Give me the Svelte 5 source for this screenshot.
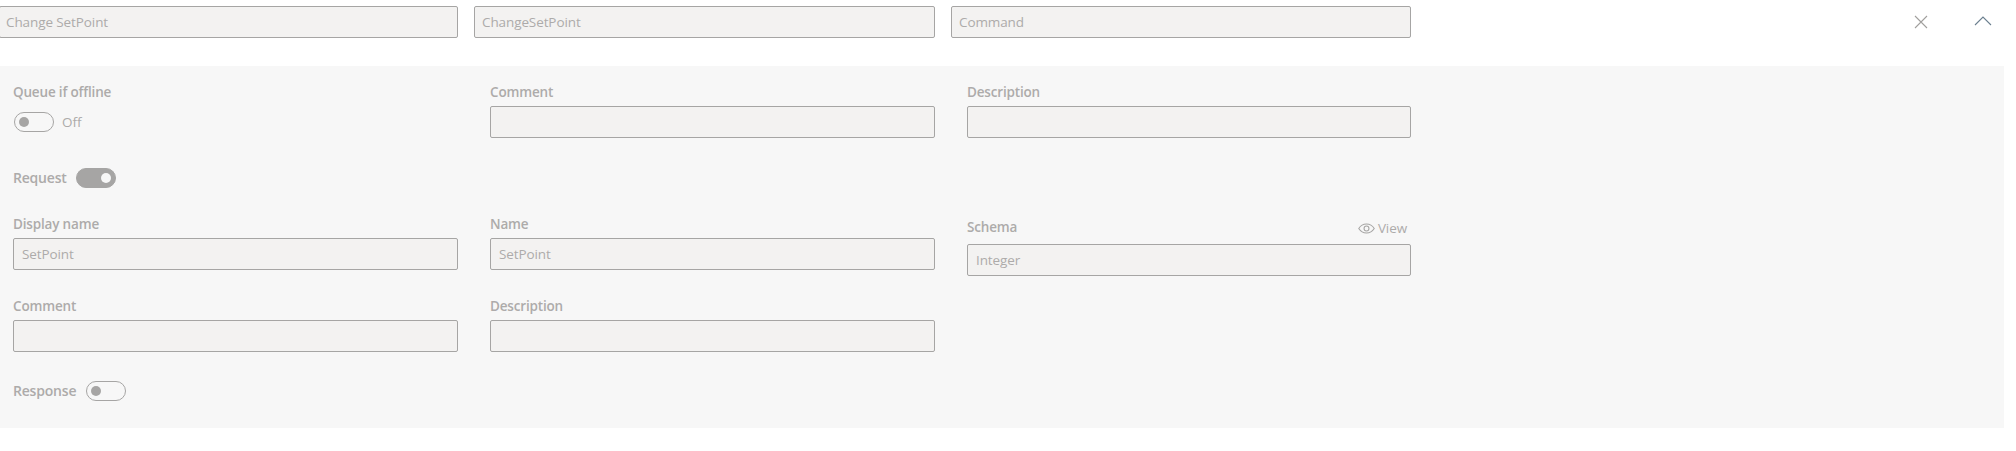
<script>
  const topFields = ['Change SetPoint', 'ChangeSetPoint', 'Command'];
</script>

<div class="page">
  <div class="top">
    <div class="top-fields">
      {#each topFields as value}
        <div class="input tight">{value}</div>
      {/each}
    </div>
    <button class="icon close" aria-label="Close">
      <svg width="14" height="14" viewBox="0 0 14 14"><path d="M1 1l12 12M13 1L1 13" /></svg>
    </button>
    <button class="icon chevron" aria-label="Collapse">
      <svg width="18" height="10" viewBox="0 0 18 10"><path d="M1 9l8-8 8 8" /></svg>
    </button>
  </div>

  <div class="panel">
    <div class="grid first">
      <div class="field">
        <div class="label">Queue if offline</div>
        <div class="toggle-row">
          <span class="toggle"></span>
          <span class="state">Off</span>
        </div>
      </div>
      <div class="field">
        <div class="label">Comment</div>
        <div class="input"></div>
      </div>
      <div class="field">
        <div class="label">Description</div>
        <div class="input"></div>
      </div>
    </div>

    <div class="switch-line request">
      <span class="heading">Request</span>
      <span class="toggle on"></span>
    </div>

    <div class="grid second">
      <div class="field">
        <div class="label">Display name</div>
        <div class="input">SetPoint</div>
      </div>
      <div class="field">
        <div class="label">Name</div>
        <div class="input">SetPoint</div>
      </div>
      <div class="field schema">
        <div class="label-row">
          <div class="label">Schema</div>
          <div class="view">
            <svg width="17" height="11" viewBox="0 0 16 10">
              <path d="M.7 5C2.500 2.200 5 .8 8 .8s5.500 1.400 7.300 4.200C13.500 7.800 11 9.200 8 9.200S2.500 7.800.7 5z" />
              <circle cx="8" cy="5" r="2.300" />
            </svg>
            <span>View</span>
          </div>
        </div>
        <div class="input">Integer</div>
      </div>
    </div>

    <div class="grid third">
      <div class="field">
        <div class="label">Comment</div>
        <div class="input"></div>
      </div>
      <div class="field">
        <div class="label">Description</div>
        <div class="input"></div>
      </div>
    </div>

    <div class="switch-line response">
      <span class="heading">Response</span>
      <span class="toggle"></span>
    </div>
  </div>
</div>

<style>
  :global(body) { margin: 0; background: #fff; }
  .page { width: 2016px; height: 451px; font-family: "Open Sans", "Noto Sans", sans-serif; color: #adabaa; overflow: hidden; }

  .top { display: flex; height: 66px; padding-top: 6px; box-sizing: border-box; align-items: flex-start; }
  .top-fields { display: grid; grid-template-columns: 459px 461px 460px; column-gap: 16px; margin-left: -1px; width: 1412px; }
  .icon { border: none; background: none; padding: 0; display: block; }
  .icon svg { display: block; fill: none; stroke: #a19f9d; stroke-width: 1.1; }
  .close { margin-left: 503px; margin-top: 9px; }
  .chevron { margin-left: 46px; margin-top: 10px; }
  .chevron svg { stroke: #6b7f8f; }

  .panel { width: 2004px; height: 362px; background: #f7f7f7; padding: 0 13px; box-sizing: border-box; }
  .grid { display: grid; grid-template-columns: 445px 445px 444px; column-gap: 32px; }
  .first { padding-top: 17px; }
  .second { margin-top: 27px; align-items: start; }
  .third { margin-top: 21px; }

  .label { font-size: 13.500px; font-weight: 600; line-height: 18px; height: 23px; letter-spacing: -0.17px; }
  .input { height: 32px; box-sizing: border-box; background: #f3f2f1; border: 1px solid #a6a5a4; border-radius: 2px; font-size: 13.500px; line-height: 30px; padding-left: 8px; letter-spacing: -0.1px; }
  .input.tight { padding-left: 7px; }
  .input.tight:first-child { padding-left: 6px; }

  .label-row { display: flex; justify-content: space-between; align-items: flex-start; height: 29px; padding: 3px 4px 0 0; box-sizing: border-box; }
  .schema .label { height: 18px; }
  .view { display: flex; align-items: center; gap: 3px; font-size: 13.500px; line-height: 18px; letter-spacing: -0.1px; padding-top: 1px; }
  .view svg { fill: none; stroke: #a6a5a4; stroke-width: 1; }

  .toggle-row { display: flex; align-items: center; gap: 8px; height: 32px; padding-left: 1px; }
  .state { font-size: 13.500px; }

  .toggle { display: block; position: relative; width: 40px; height: 20px; box-sizing: border-box; border: 1px solid #a6a5a4; border-radius: 10px; }
  .toggle::after { content: ""; position: absolute; top: 4px; left: 4px; width: 10px; height: 10px; border-radius: 50%; background: #a6a5a4; }
  .toggle.on { background: #a6a5a4; }
  .toggle.on::after { left: auto; right: 4px; background: #f7f7f7; }

  .switch-line { display: flex; align-items: center; gap: 9px; height: 20px; }
  .response { gap: 10px; }
  .heading { font-size: 14px; font-weight: 600; letter-spacing: -0.2px; line-height: 20px; }
  .request { margin-top: 30px; }
  .response { margin-top: 29px; }
</style>
